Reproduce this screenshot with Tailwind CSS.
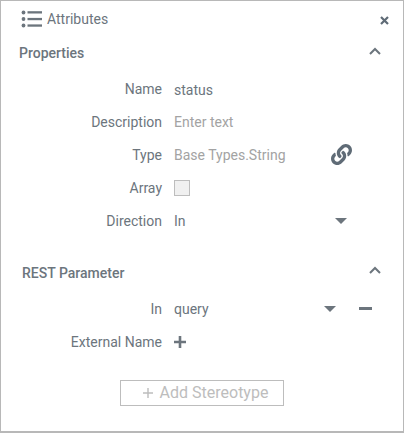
<!DOCTYPE html>
<html><head><meta charset="utf-8"><script src="https://cdn.jsdelivr.net/npm/@tailwindcss/browser@4"></script></head>
<body class="bg-white">
<div class="relative w-[404px] h-[433px] box-border border border-[#b8b8b8] border-b-2 bg-white overflow-hidden font-['Roboto',sans-serif] text-[14px] leading-[20px] text-[#6c757d]">
  <div class="flex items-center h-[24px] mt-[6px] pl-[20px] pr-[14px]">
    <svg class="w-[21px] h-[18px] mr-[5px]" viewBox="0 0 21 18" fill="#6c757d"><circle cx="2.5" cy="2.5" r="1.9"/><circle cx="2.5" cy="9" r="1.9"/><circle cx="2.5" cy="15.5" r="1.9"/><rect x="6.5" y="1.2" width="14.5" height="2.3"/><rect x="6.5" y="7.9" width="14.5" height="2.3"/><rect x="6.5" y="14.4" width="14.5" height="2.3"/></svg>
    <span>Attributes</span>
    <svg class="ml-auto mt-[2px] w-[9px] h-[9px]" viewBox="0 0 9 9" stroke="#5f6b76" stroke-width="2.2"><path d="M1 1l7 7M8 1l-7 7"/></svg>
  </div>
  <div class="flex items-center justify-between h-[20px] mt-[12px] pl-[18px] pr-[22px]">
    <span class="font-medium">Properties</span>
    <svg class="w-[12px] h-[8px] -mt-[5px]" viewBox="0 0 12 8" fill="none" stroke="#6c757d" stroke-width="2"><path d="M1 7l5-5 5 5"/></svg>
  </div>
  <div class="mt-[9px] grid grid-cols-[161px_1fr] gap-x-[12px] auto-rows-[33px] items-center">
    <div class="text-right">Name</div><div class="text-[#6c757d] mt-[2px]">status</div>
    <div class="text-right">Description</div><div class="text-[#a3a3a3]">Enter text</div>
    <div class="text-right">Type</div>
    <div class="flex items-center text-[#a3a3a3]"><span>Base Types.String</span>
      <svg class="ml-[45px] w-[21px] h-[21px]" viewBox="0 0 512 512" fill="#5f6b76"><path d="M326.6 185.4c59.7 59.8 58.9 155.7.4 214.6l-67.2 67.200c-59.300 59.300-155.700 59.300-215 0-59.300-59.300-59.300-155.700 0-215l37.100-37.100c9.800-9.800 26.800-3.300 27.300 10.600.6 17.700 3.800 35.500 9.700 52.600 2 5.800.6 12.200-3.800 16.500l-13.100 13.100c-28 28-28.900 73.700-1.200 102 28 28.500 74 28.700 102.200.5l67.200-67.200c28.200-28.200 28.100-73.800 0-101.800-3.700-3.700-7.400-6.600-10.300-8.600-4.100-2.800-6.600-7.400-6.800-12.400-.4-10.500 3.300-21.400 11.600-29.700l21.100-21.100c5.500-5.500 14.200-6.200 20.600-1.700 7.300 5.100 14.200 10.900 20.200 16.900zM467.500 44.400c-59.300-59.300-155.700-59.300-215 0l-67.200 67.200-.4.400c-58.600 58.900-59.300 154.800.4 214.600 6 6 12.900 11.800 20.200 16.900 6.400 4.500 15.100 3.800 20.600-1.700l21.100-21.100c8.300-8.300 12-19.200 11.600-29.700-.2-5-2.700-9.600-6.800-12.400-2.900-2-6.600-4.900-10.300-8.600-28.100-28-28.200-73.600 0-101.800l67.200-67.200c28.200-28.200 74.200-28 102.200.5 27.700 28.300 26.800 74-1.200 102l-13.100 13.100c-4.400 4.300-5.800 10.700-3.800 16.500 5.900 17.100 9.100 34.900 9.700 52.600.5 13.900 17.500 20.400 27.300 10.600l37.100-37.100c59.300-59.300 59.300-155.700 0-215z"/></svg>
    </div>
    <div class="text-right">Array</div><div><div class="w-[16px] h-[16px] border border-[#bdbdbd] bg-[#f0f0f0]"></div></div>
    <div class="text-right">Direction</div>
    <div class="flex items-center"><span>In</span><svg class="ml-[149px] w-[12px] h-[6px]" viewBox="0 0 12 6" fill="#6c757d"><path d="M0 0h12L6 6z"/></svg></div>
  </div>
  <div class="flex items-center justify-between h-[20px] mt-[26px] pl-[21px] pr-[22px]">
    <span class="font-medium">REST Parameter</span>
    <svg class="w-[12px] h-[8px] -mt-[6px]" viewBox="0 0 12 8" fill="none" stroke="#6c757d" stroke-width="2"><path d="M1 7l5-5 5 5"/></svg>
  </div>
  <div class="mt-[9px] grid grid-cols-[161px_1fr] gap-x-[12px] auto-rows-[33px] items-center">
    <div class="text-right">In</div>
    <div class="flex items-center"><span class="w-[150px]">query</span><svg class="w-[12px] h-[6px]" viewBox="0 0 12 6" fill="#6c757d"><path d="M0 0h12L6 6z"/></svg><div class="ml-[23px] w-[13px] h-[2.500px] bg-[#6c757d]"></div></div>
    <div class="text-right">External Name</div>
    <div><svg class="w-[12px] h-[12px]" viewBox="0 0 12 12" fill="#6c757d"><path d="M4.700 0h2.600v4.700H12v2.600H7.300V12H4.700V7.300H0V4.700h4.700z"/></svg></div>
  </div>
  <div class="flex items-center justify-center w-[164px] h-[26px] ml-[119px] mt-[22px] pl-[7px] border border-[#bdbdbd] text-[16px] text-[#bdbdbd]">
    <svg class="w-[10px] h-[10px] mr-[7px]" viewBox="0 0 10 10" fill="#bdbdbd"><path d="M4.300 0h1.400v4.300H10v1.400H5.700V10H4.300V5.700H0V4.300h4.300z"/></svg>
    <span>Add Stereotype</span>
  </div>
</div>
</body></html>
